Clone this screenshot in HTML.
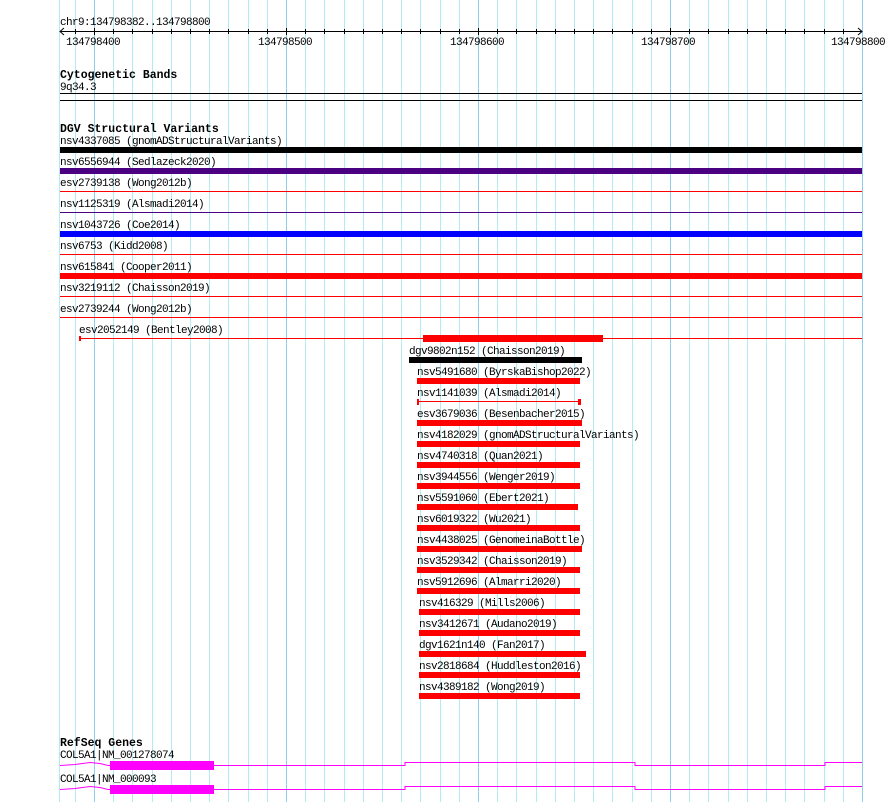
<!DOCTYPE html>
<html><head><meta charset="utf-8"><style>
html,body{margin:0;padding:0;background:#fff;}
svg{display:block;}
text{font-family:"Liberation Mono",monospace;font-size:11px;letter-spacing:-0.6px;fill:#000;}
.h{font-weight:bold;font-size:11.5px;letter-spacing:0;}
</style></head><body>
<svg width="890" height="802" xmlns="http://www.w3.org/2000/svg">
<g id="grid" stroke="#b2ecf2" stroke-width="1">
<line x1="59.5" y1="0" x2="59.5" y2="802"/>
<line x1="75.5" y1="0" x2="75.5" y2="802"/>
<line x1="113.5" y1="0" x2="113.5" y2="802"/><line x1="132.5" y1="0" x2="132.5" y2="802"/><line x1="152.5" y1="0" x2="152.5" y2="802"/><line x1="171.5" y1="0" x2="171.5" y2="802"/><line x1="190.5" y1="0" x2="190.5" y2="802"/><line x1="209.5" y1="0" x2="209.5" y2="802"/><line x1="228.5" y1="0" x2="228.5" y2="802"/><line x1="248.5" y1="0" x2="248.5" y2="802"/><line x1="267.5" y1="0" x2="267.5" y2="802"/>
<line x1="305.5" y1="0" x2="305.5" y2="802"/><line x1="324.5" y1="0" x2="324.5" y2="802"/><line x1="344.5" y1="0" x2="344.5" y2="802"/><line x1="363.5" y1="0" x2="363.5" y2="802"/><line x1="382.5" y1="0" x2="382.5" y2="802"/><line x1="401.5" y1="0" x2="401.5" y2="802"/><line x1="420.5" y1="0" x2="420.5" y2="802"/><line x1="440.5" y1="0" x2="440.5" y2="802"/><line x1="459.5" y1="0" x2="459.5" y2="802"/>
<line x1="497.5" y1="0" x2="497.5" y2="802"/><line x1="516.5" y1="0" x2="516.5" y2="802"/><line x1="536.5" y1="0" x2="536.5" y2="802"/><line x1="555.5" y1="0" x2="555.5" y2="802"/><line x1="574.5" y1="0" x2="574.5" y2="802"/><line x1="593.5" y1="0" x2="593.5" y2="802"/><line x1="612.5" y1="0" x2="612.5" y2="802"/><line x1="632.5" y1="0" x2="632.5" y2="802"/><line x1="651.5" y1="0" x2="651.5" y2="802"/>
<line x1="689.5" y1="0" x2="689.5" y2="802"/><line x1="708.5" y1="0" x2="708.5" y2="802"/><line x1="728.5" y1="0" x2="728.5" y2="802"/><line x1="747.5" y1="0" x2="747.5" y2="802"/><line x1="766.5" y1="0" x2="766.5" y2="802"/><line x1="785.5" y1="0" x2="785.5" y2="802"/><line x1="804.5" y1="0" x2="804.5" y2="802"/><line x1="824.5" y1="0" x2="824.5" y2="802"/><line x1="843.5" y1="0" x2="843.5" y2="802"/>
</g>
<g stroke="#90cce8">
<line x1="94.5" y1="0" x2="94.5" y2="802"/><line x1="286.5" y1="0" x2="286.5" y2="802"/><line x1="478.5" y1="0" x2="478.5" y2="802"/><line x1="670.5" y1="0" x2="670.5" y2="802"/><line x1="862.5" y1="0" x2="862.5" y2="802"/>
</g>
<!-- ruler -->
<text x="60" y="25">chr9:134798382..134798800</text>
<g stroke="#000" stroke-width="1" fill="none">
<line x1="60" y1="31.5" x2="862" y2="31.5"/>
<polyline points="64,28 60,31.5 64,35"/>
<polyline points="858,28 862,31.5 858,35"/>
<line x1="75.5" y1="29" x2="75.5" y2="34"/><line x1="94.5" y1="28" x2="94.5" y2="35"/><line x1="113.5" y1="29" x2="113.5" y2="34"/><line x1="132.5" y1="29" x2="132.5" y2="34"/><line x1="152.5" y1="29" x2="152.5" y2="34"/><line x1="171.5" y1="29" x2="171.5" y2="34"/><line x1="190.5" y1="29" x2="190.5" y2="34"/><line x1="209.5" y1="29" x2="209.5" y2="34"/><line x1="228.5" y1="29" x2="228.5" y2="34"/><line x1="248.5" y1="29" x2="248.5" y2="34"/><line x1="267.5" y1="29" x2="267.5" y2="34"/><line x1="286.5" y1="28" x2="286.5" y2="35"/><line x1="305.5" y1="29" x2="305.5" y2="34"/><line x1="324.5" y1="29" x2="324.5" y2="34"/><line x1="344.5" y1="29" x2="344.5" y2="34"/><line x1="363.5" y1="29" x2="363.5" y2="34"/><line x1="382.5" y1="29" x2="382.5" y2="34"/><line x1="401.5" y1="29" x2="401.5" y2="34"/><line x1="420.5" y1="29" x2="420.5" y2="34"/><line x1="440.5" y1="29" x2="440.5" y2="34"/><line x1="459.5" y1="29" x2="459.5" y2="34"/><line x1="478.5" y1="28" x2="478.5" y2="35"/><line x1="497.5" y1="29" x2="497.5" y2="34"/><line x1="516.5" y1="29" x2="516.5" y2="34"/><line x1="536.5" y1="29" x2="536.5" y2="34"/><line x1="555.5" y1="29" x2="555.5" y2="34"/><line x1="574.5" y1="29" x2="574.5" y2="34"/><line x1="593.5" y1="29" x2="593.5" y2="34"/><line x1="612.5" y1="29" x2="612.5" y2="34"/><line x1="632.5" y1="29" x2="632.5" y2="34"/><line x1="651.5" y1="29" x2="651.5" y2="34"/><line x1="670.5" y1="28" x2="670.5" y2="35"/><line x1="689.5" y1="29" x2="689.5" y2="34"/><line x1="708.5" y1="29" x2="708.5" y2="34"/><line x1="728.5" y1="29" x2="728.5" y2="34"/><line x1="747.5" y1="29" x2="747.5" y2="34"/><line x1="766.5" y1="29" x2="766.5" y2="34"/><line x1="785.5" y1="29" x2="785.5" y2="34"/><line x1="804.5" y1="29" x2="804.5" y2="34"/><line x1="824.5" y1="29" x2="824.5" y2="34"/><line x1="843.5" y1="29" x2="843.5" y2="34"/>
</g>
<text x="66" y="45">134798400</text>
<text x="258" y="45">134798500</text>
<text x="450" y="45">134798600</text>
<text x="641" y="45">134798700</text>
<text x="831" y="45">134798800</text>
<!-- cyto -->
<text class="h" x="60" y="78">Cytogenetic Bands</text>
<text x="60" y="90">9q34.3</text>
<rect x="60" y="93" width="802" height="1" fill="#000"/>
<rect x="60" y="100" width="802" height="1" fill="#000"/>
<!-- DGV -->
<text class="h" x="60" y="132">DGV Structural Variants</text>
<text x="60" y="144">nsv4337085 (gnomADStructuralVariants)</text>
<rect x="60" y="147" width="802" height="6" fill="#000"/>
<text x="60" y="165">nsv6556944 (Sedlazeck2020)</text>
<rect x="60" y="168" width="802" height="6" fill="#4b0082"/>
<text x="60" y="186">esv2739138 (Wong2012b)</text>
<rect x="60" y="191" width="802" height="1" fill="#f00"/>
<text x="60" y="207">nsv1125319 (Alsmadi2014)</text>
<rect x="60" y="212" width="802" height="1" fill="#4b0082"/>
<text x="60" y="228">nsv1043726 (Coe2014)</text>
<rect x="60" y="231" width="802" height="6" fill="#00f"/>
<text x="60" y="249">nsv6753 (Kidd2008)</text>
<rect x="60" y="254" width="802" height="1" fill="#f00"/>
<text x="60" y="270">nsv615841 (Cooper2011)</text>
<rect x="60" y="273" width="802" height="6" fill="#f00"/>
<text x="60" y="291">nsv3219112 (Chaisson2019)</text>
<rect x="60" y="296" width="802" height="1" fill="#f00"/>
<text x="60" y="312">esv2739244 (Wong2012b)</text>
<rect x="60" y="317" width="802" height="1" fill="#f00"/>
<text x="79" y="333">esv2052149 (Bentley2008)</text>
<rect x="80" y="338" width="782" height="1" fill="#f00"/>
<rect x="79" y="336" width="2" height="5" fill="#f00"/>
<rect x="423" y="335" width="180" height="7" fill="#f00"/>
<text x="409" y="354">dgv9802n152 (Chaisson2019)</text>
<rect x="409" y="357" width="173" height="6" fill="#000"/>
<text x="417" y="375">nsv5491680 (ByrskaBishop2022)</text>
<rect x="417" y="378" width="163" height="6" fill="#f00"/>
<text x="417" y="396">nsv1141039 (Alsmadi2014)</text>
<rect x="417" y="401" width="163" height="1" fill="#f00"/>
<rect x="417" y="399" width="2" height="6" fill="#f00"/><rect x="578" y="399" width="3" height="6" fill="#f00"/>
<text x="417" y="417">esv3679036 (Besenbacher2015)</text>
<rect x="417" y="420" width="165" height="6" fill="#f00"/>
<text x="417" y="438">nsv4182029 (gnomADStructuralVariants)</text>
<rect x="417" y="441" width="163" height="6" fill="#f00"/>
<text x="417" y="459">nsv4740318 (Quan2021)</text>
<rect x="417" y="462" width="163" height="6" fill="#f00"/>
<text x="417" y="480">nsv3944556 (Wenger2019)</text>
<rect x="417" y="483" width="163" height="6" fill="#f00"/>
<text x="417" y="501">nsv5591060 (Ebert2021)</text>
<rect x="417" y="504" width="161" height="6" fill="#f00"/>
<text x="417" y="522">nsv6019322 (Wu2021)</text>
<rect x="417" y="525" width="163" height="6" fill="#f00"/>
<text x="417" y="543">nsv4438025 (GenomeinaBottle)</text>
<rect x="417" y="546" width="165" height="6" fill="#f00"/>
<text x="417" y="564">nsv3529342 (Chaisson2019)</text>
<rect x="417" y="567" width="163" height="6" fill="#f00"/>
<text x="417" y="585">nsv5912696 (Almarri2020)</text>
<rect x="417" y="588" width="163" height="6" fill="#f00"/>
<text x="419" y="606">nsv416329 (Mills2006)</text>
<rect x="419" y="609" width="161" height="6" fill="#f00"/>
<text x="419" y="627">nsv3412671 (Audano2019)</text>
<rect x="419" y="630" width="161" height="6" fill="#f00"/>
<text x="419" y="648">dgv1621n140 (Fan2017)</text>
<rect x="419" y="651" width="167" height="6" fill="#f00"/>
<text x="419" y="669">nsv2818684 (Huddleston2016)</text>
<rect x="419" y="672" width="161" height="6" fill="#f00"/>
<text x="419" y="690">nsv4389182 (Wong2019)</text>
<rect x="419" y="693" width="161" height="6" fill="#f00"/>
<!-- RefSeq -->
<text class="h" x="60" y="746">RefSeq Genes</text>
<text x="60" y="758">COL5A1|NM_001278074</text>
<polyline fill="none" stroke="#f0f" stroke-width="1" points="60,765.5 75,764.5 90,762.5 100,763.5 108,765.5 110,765.5"/>
<rect x="110" y="761" width="104" height="9" fill="#f0f"/>
<polyline fill="none" stroke="#f0f" stroke-width="1" points="214,765.5 405,765.5 405,762.5 635,762.5 635,765.5 825,765.5 825,762.5 862,762.5"/>
<text x="60" y="782">COL5A1|NM_000093</text>
<polyline fill="none" stroke="#f0f" stroke-width="1" points="60,789.5 75,788.5 90,786.5 100,787.5 108,789.5 110,789.5"/>
<rect x="110" y="785" width="104" height="9" fill="#f0f"/>
<polyline fill="none" stroke="#f0f" stroke-width="1" points="214,789.5 405,789.5 405,786.5 635,786.5 635,789.5 825,789.5 825,786.5 862,786.5"/>
</svg>
</body></html>
